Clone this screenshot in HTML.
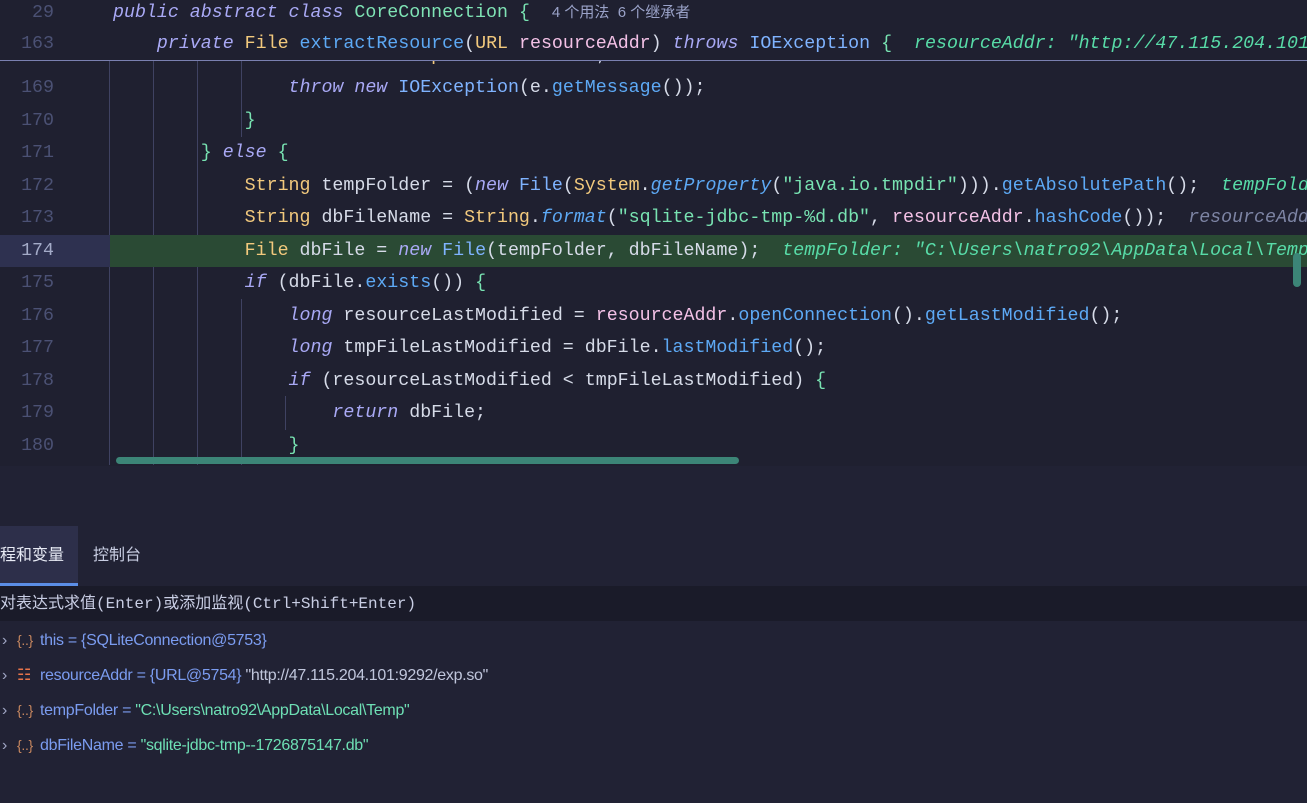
<!DOCTYPE html>
<html><head><meta charset="utf-8"><style>
body{margin:0;width:1307px;height:803px;overflow:hidden;background:#1f2030;font-family:"Liberation Mono","Noto Sans CJK SC",monospace;position:relative}
.l{position:absolute;left:0;height:32.5px;line-height:32.5px;font-size:18.3px;white-space:pre;color:#d6dbe8;width:1307px;overflow:hidden}
.n{position:absolute;left:0;width:54px;text-align:right;color:#4b5174}
.c{position:absolute;left:113px}
.k{color:#a9a9f5;font-style:italic}
.t{color:#f2c97d}
.cl{color:#7fb3ff}
.m{color:#5da9f5}
.s{color:#78e3b2}
.p{color:#f3c1e6}
.h{color:#58dca8;font-style:italic}
.hg{color:#7d84a4;font-style:italic}
.g{position:absolute;width:1px;background:#3f4262}
.ui{font-family:"Liberation Sans","Noto Sans CJK SC",sans-serif}
.v{height:35px;line-height:35px;white-space:nowrap;position:relative;padding-left:40px}
.v .a{position:absolute;left:2px;color:#a0a6c4}
.v .i{position:absolute;left:17px;color:#c7875f;font-size:14px}
</style></head><body>
<div class="g" style="left:109px;top:60px;height:405px"></div>
<div class="g" style="left:153px;top:60px;height:405px"></div>
<div class="g" style="left:197px;top:60px;height:405px"></div>
<div class="g" style="left:241px;top:60px;height:77px"></div>
<div class="g" style="left:241px;top:299px;height:166px"></div>
<div class="g" style="left:285px;top:396px;height:34px"></div>
<div style="position:absolute;left:0;top:235px;width:110px;height:32px;background:#2e3150"></div>
<div style="position:absolute;left:110px;top:235px;width:1197px;height:32px;background:#2a4a34"></div>

<div class="l" style="top:39.5px"><span class="n">168</span><span class="c">                <span class="t">UnixLinuxException e</span> = <span class="s">"Var"</span>;</span></div>
<div class="l" style="top:72px"><span class="n">169</span><span class="c">                <span class="k">throw new</span> <span class="cl">IOException</span>(e.<span class="m">getMessage</span>());</span></div>
<div class="l" style="top:104.5px"><span class="n">170</span><span class="c">            <span class="s">}</span></span></div>
<div class="l" style="top:137px"><span class="n">171</span><span class="c">        <span class="s">}</span> <span class="k">else</span> <span class="s">{</span></span></div>
<div class="l" style="top:169.5px"><span class="n">172</span><span class="c">            <span class="t">String</span> tempFolder = (<span class="k">new</span> <span class="cl">File</span>(<span class="t">System</span>.<span class="m" style="font-style:italic">getProperty</span>(<span class="s">"java.io.tmpdir"</span>))).<span class="m">getAbsolutePath</span>();  <span class="h">tempFolder: "C:\Users</span></span></div>
<div class="l" style="top:202px"><span class="n">173</span><span class="c">            <span class="t">String</span> dbFileName = <span class="t">String</span>.<span class="m" style="font-style:italic">format</span>(<span class="s">"sqlite-jdbc-tmp-%d.db"</span>, <span class="p">resourceAddr</span>.<span class="m">hashCode</span>());  <span class="hg">resourceAddr: "http</span></span></div>
<div class="l" style="top:234.5px"><span class="n" style="color:#a4abc8">174</span><span class="c">            <span class="t">File</span> dbFile = <span class="k">new</span> <span class="cl">File</span>(tempFolder, dbFileName);  <span class="h">tempFolder: "C:\Users\natro92\AppData\Local\Temp"</span></span></div>
<div class="l" style="top:267px"><span class="n">175</span><span class="c">            <span class="k">if</span> (dbFile.<span class="m">exists</span>()) <span class="s">{</span></span></div>
<div class="l" style="top:299.5px"><span class="n">176</span><span class="c">                <span class="k">long</span> resourceLastModified = <span class="p">resourceAddr</span>.<span class="m">openConnection</span>().<span class="m">getLastModified</span>();</span></div>
<div class="l" style="top:332px"><span class="n">177</span><span class="c">                <span class="k">long</span> tmpFileLastModified = dbFile.<span class="m">lastModified</span>();</span></div>
<div class="l" style="top:364.5px"><span class="n">178</span><span class="c">                <span class="k">if</span> (resourceLastModified &lt; tmpFileLastModified) <span class="s">{</span></span></div>
<div class="l" style="top:397px"><span class="n">179</span><span class="c">                    <span class="k">return</span> dbFile;</span></div>
<div class="l" style="top:429.5px"><span class="n">180</span><span class="c">                <span class="s">}</span></span></div>

<div style="position:absolute;left:0;top:0;width:1307px;height:60px;background:#1f2030;border-bottom:1px solid #7a80b0"></div>
<div class="l" style="top:-3px"><span class="n">29</span><span class="c"><span class="k">public abstract class</span> <span style="color:#7fe3b5">CoreConnection</span> <span class="s">{</span>  <span class="ui" style="font-size:15px;color:#9aa2c8">4 个用法  6 个继承者</span></span></div>
<div class="l" style="top:28px"><span class="n">163</span><span class="c">    <span class="k">private</span> <span class="t">File</span> <span class="m">extractResource</span>(<span class="t">URL</span> <span class="p">resourceAddr</span>) <span class="k">throws</span> <span class="cl">IOException</span> <span class="s">{</span>  <span class="h">resourceAddr: "http://47.115.204.101:9292/exp.so"</span></span></div>

<div style="position:absolute;left:116px;top:457px;width:623px;height:7px;border-radius:4px;background:#3c8577"></div>
<div style="position:absolute;left:1293px;top:253px;width:8px;height:34px;border-radius:4px;background:#3c8577"></div>

<div style="position:absolute;left:0;top:466px;width:1307px;height:337px;background:#212234"></div>
<div class="ui" style="position:absolute;left:0;top:526px;width:78px;height:57px;background:#2d2f4a;border-bottom:3px solid #5b8ee6;color:#e8ebf5;font-size:16px;line-height:60px">程和变量</div>
<div class="ui" style="position:absolute;left:93px;top:526px;color:#c8cde2;font-size:16px;line-height:60px">控制台</div>
<div style="position:absolute;left:0;top:586px;width:1307px;height:35px;background:#1a1b29;color:#c9cee4;font-size:16px;line-height:36px;white-space:pre">对表达式求值(Enter)或添加监视(Ctrl+Shift+Enter)</div>
<div class="ui" style="position:absolute;left:0;top:623px;font-size:16px;color:#7b9cf0;letter-spacing:-0.3px">
<div class="v"><span class="a">›</span><span class="i">{..}</span>this = {SQLiteConnection@5753}</div>
<div class="v"><span class="a">›</span><span class="i" style="color:#e8744a;font-size:16px">☷</span>resourceAddr = {URL@5754} <span style="color:#c0c6dc">"http://47.115.204.101:9292/exp.so"</span></div>
<div class="v"><span class="a">›</span><span class="i">{..}</span>tempFolder = <span style="color:#6ee0b5">"C:\Users\natro92\AppData\Local\Temp"</span></div>
<div class="v"><span class="a">›</span><span class="i">{..}</span>dbFileName = <span style="color:#6ee0b5">"sqlite-jdbc-tmp--1726875147.db"</span></div>
</div>
</body></html>
